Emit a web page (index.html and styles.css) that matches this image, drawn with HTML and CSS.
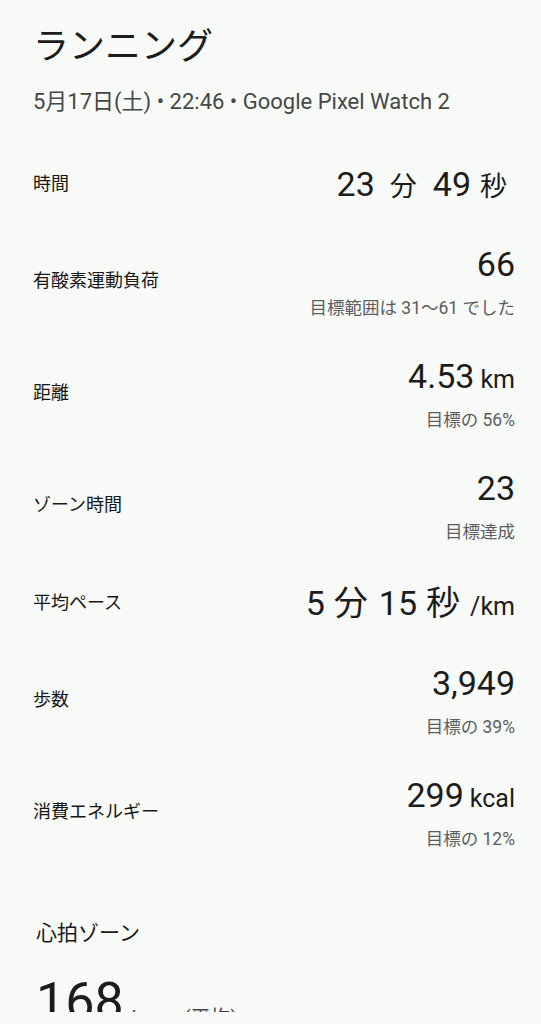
FILE: index.html
```html
<!doctype html>
<html lang="ja">
<head>
<meta charset="UTF-8">
<title>ランニング</title>
<link rel="stylesheet" href="styles.css">
</head>
<body>
<div class="screen">
	<header class="head">
		<h1 class="title">ランニング</h1>
		<p class="meta">5月17日(土) • 22:46 • Google Pixel Watch 2</p>
	</header>

	<ul class="stats">
		<li class="stat">
			<span class="stat-label">時間</span>
			<div class="stat-value">
				<div class="value value-time"><span>23</span><span class="u-time">分</span><span class="gap-time">49</span><span class="u-time u-last">秒</span></div>
			</div>
		</li>
		<li class="stat">
			<span class="stat-label">有酸素運動負荷</span>
			<div class="stat-value">
				<div class="value">66</div>
				<div class="note">目標範囲は 31〜61 でした</div>
			</div>
		</li>
		<li class="stat">
			<span class="stat-label">距離</span>
			<div class="stat-value">
				<div class="value">4.53<span class="u-small">km</span></div>
				<div class="note">目標の 56%</div>
			</div>
		</li>
		<li class="stat">
			<span class="stat-label">ゾーン時間</span>
			<div class="stat-value">
				<div class="value">23</div>
				<div class="note">目標達成</div>
			</div>
		</li>
		<li class="stat">
			<span class="stat-label">平均ペース</span>
			<div class="stat-value">
				<div class="value"><span>5</span><span class="u-pace">分</span><span class="gap-pace">15</span><span class="u-pace">秒</span><span class="u-small">/km</span></div>
			</div>
		</li>
		<li class="stat">
			<span class="stat-label">歩数</span>
			<div class="stat-value">
				<div class="value">3,949</div>
				<div class="note">目標の 39%</div>
			</div>
		</li>
		<li class="stat">
			<span class="stat-label">消費エネルギー</span>
			<div class="stat-value">
				<div class="value">299<span class="u-small">kcal</span></div>
				<div class="note">目標の 12%</div>
			</div>
		</li>
	</ul>

	<section class="zones">
		<h2 class="zones-title">心拍ゾーン</h2>
		<div class="bpm"><span class="bpm-num">168</span><span class="bpm-unit">bpm</span><span class="bpm-avg">(平均)</span></div>
	</section>
</div>
</body>
</html>
```

FILE: styles.css
```css
* {
	box-sizing: border-box;
}
body {
	margin: 0;
	background-color: #f8faf8;
	color: #1b1c1b;
	font-family: Roboto, "Noto Sans CJK JP", sans-serif;
}

.screen {
	height: 1012px;
	overflow: hidden;
	padding: 23px 26px 0 33px;
}

/* header */
.title {
	margin: 0;
	font-size: 36px;
	line-height: 48px;
	font-weight: 400;
}
.meta {
	margin: 16px 0 0;
	font-size: 22px;
	line-height: 30px;
	color: #444746;
}

/* stat rows */
.stats {
	list-style: none;
	margin: 25px 0 0;
	padding: 0;
}
.stat {
	display: flex;
	justify-content: space-between;
	align-items: center;
	min-height: 83px;
	padding: 17px 0;
}
.stat-label {
	font-size: 18px;
	line-height: 24px;
	font-weight: 400;
	color: #161716;
}
.stat-value {
	text-align: right;
}
.value {
	font-size: 34px;
	line-height: 44px;
	white-space: nowrap;
}
.note {
	margin-top: 11px;
	font-size: 17.5px;
	line-height: 23px;
	color: #5b5e5d;
}

.u-small {
	font-size: 25px;
	line-height: 1;
	margin-left: 6px;
}
.u-time {
	font-size: 27px;
	line-height: 1;
	margin-left: 15px;
}
.gap-time {
	margin-left: 16px;
}
.u-time.u-last {
	margin-left: 9px;
	padding-right: 8px;
}
.u-pace {
	font-size: 34px;
	line-height: 1;
	margin-left: 9px;
}
.gap-pace {
	margin-left: 11px;
}
.value .u-pace + .u-small {
	margin-left: 10px;
}

/* heart rate */
.zones {
	margin-top: 51px;
	padding-left: 3px;
}
.zones-title {
	margin: 0;
	font-size: 21px;
	line-height: 28px;
	font-weight: 400;
}
.bpm {
	margin-top: 25px;
	font-size: 52px;
	line-height: 60px;
}
.bpm-unit,
.bpm-avg {
	font-size: 20px;
	line-height: 1;
	color: #444746;
	vertical-align: -6px;
}
.bpm-unit {
	margin-left: 8px;
}
.bpm-avg {
	margin-left: 12px;
}
```
